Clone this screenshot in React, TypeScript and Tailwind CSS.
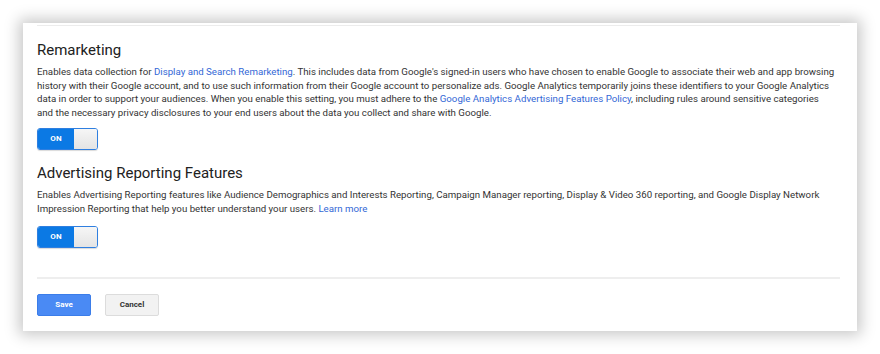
import type { ReactNode } from "react"

function Toggle() {
    return (
        <div className="flex h-[22px] w-[61px] overflow-hidden rounded-[3px] border border-[#2f7fe0] shadow-[0_1px_1px_rgba(0,0,0,0.15)]">
            <div className="flex w-[36px] items-center justify-center bg-[#0b79e4] text-[8px] font-bold tracking-wide text-white">
                ON
            </div>
            <div className="flex-1 bg-gradient-to-b from-[#f6f6f6] to-[#e4e4e4]" />
        </div>
    )
}

function A({ children }: { children: ReactNode }) {
    return <span className="text-[#3367d6]">{children}</span>
}

export default function App() {
    return (
        <div className="min-h-screen bg-white pl-[23px] pt-[23px] font-['Roboto',sans-serif]">
            <div className="h-[308px] w-[834px] bg-white shadow-[0_0_14px_4px_rgba(0,0,0,0.22)]">
                <div className="ml-[14px] mr-[17px] pt-[2px]">
                    <div className="h-px bg-[#ececec]" />
                </div>
                <div className="px-[14px] pt-[14px]">
                    <h2 className="text-[15px] leading-[20px] text-[#212121]">Remarketing</h2>
                    <p className="mt-[5px] whitespace-nowrap text-[9.7px] leading-[13.5px] text-[#333]">
                        Enables data collection for <A>Display and Search Remarketing</A>. This includes data from
                        Google's signed-in users who have chosen to enable Google to associate their web and app browsing
                        <br />
                        history with their Google account, and to use such information from their Google account to
                        personalize ads. Google Analytics temporarily joins these identifiers to your Google Analytics
                        <br />
                        data in order to support your audiences. When you enable this setting, you must adhere to the{" "}
                        <A>Google Analytics Advertising Features Policy</A>, including rules around sensitive categories
                        <br />
                        and the necessary privacy disclosures to your end users about the data you collect and share with
                        Google.
                    </p>
                    <div className="mt-[9px]">
                        <Toggle />
                    </div>

                    <h2 className="mt-[13px] text-[15px] leading-[20px] text-[#212121]">
                        Advertising Reporting Features
                    </h2>
                    <p className="mt-[5px] whitespace-nowrap text-[9.7px] leading-[13.5px] text-[#333]">
                        Enables Advertising Reporting features like Audience Demographics and Interests Reporting,
                        Campaign Manager reporting, Display &amp; Video 360 reporting, and Google Display Network
                        <br />
                        Impression Reporting that help you better understand your users. <A>Learn more</A>
                    </p>
                    <div className="mt-[11px]">
                        <Toggle />
                    </div>

                    <div className="mr-[3px] mt-[29px] h-[2px] bg-[#eeeeee]" />

                    <div className="mt-[15px] flex gap-[14px]">
                        <button className="h-[22px] w-[54px] rounded-[2px] border border-[#3b7de9] bg-[#4a8af4] text-[8px] font-bold text-white">
                            Save
                        </button>
                        <button className="h-[22px] w-[54px] rounded-[2px] border border-[#dcdcdc] bg-[#f2f2f2] text-[8px] font-bold text-[#333]">
                            Cancel
                        </button>
                    </div>
                </div>
            </div>
        </div>
    )
}
